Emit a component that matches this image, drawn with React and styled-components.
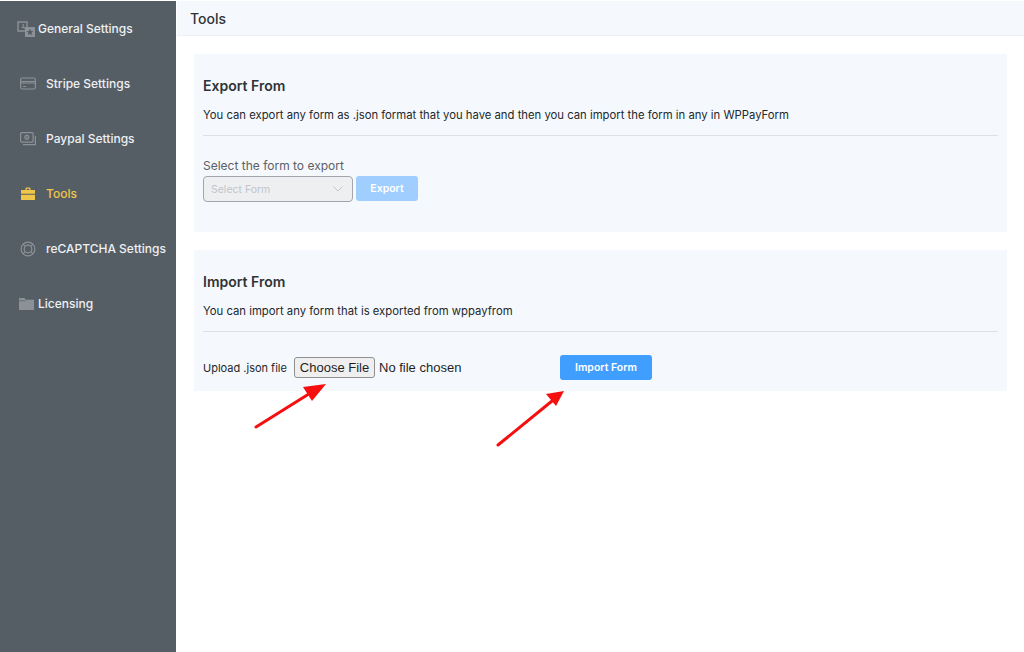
import React from 'react';
import styled, { createGlobalStyle } from 'styled-components';

const GlobalStyle = createGlobalStyle`
  html, body {
    margin: 0;
    padding: 0;
    background: #fff;
    font-family: Inter, "Liberation Sans", sans-serif;
  }
  * { box-sizing: border-box; }
`;

const Page = styled.div`
  position: relative;
  display: flex;
  width: 1024px;
  height: 652px;
  overflow: hidden;
  padding-top: 1px;
  background: #fff;
`;

const Sidebar = styled.nav`
  width: 176px;
  flex-shrink: 0;
  background: #565e65;
`;

const MenuItem = styled.a`
  display: flex;
  align-items: center;
  height: 55px;
  padding-left: ${(p) => (p.$flush ? '17px' : '20px')};
  gap: ${(p) => (p.$flush ? '2px' : '10px')};
  color: ${(p) => (p.$active ? '#f0c648' : '#eef0f2')};
  font-size: 12px;
  font-weight: 500;
`;

const IconSlot = styled.span`
  display: flex;
  width: ${(p) => (p.$flush ? '19px' : '16px')};
  height: 16px;
  align-items: center;
  justify-content: center;
  color: ${(p) => (p.$active ? '#f0c648' : '#8b9197')};
`;

const Main = styled.main`
  flex: 1;
  min-width: 0;
`;

const Header = styled.header`
  height: 35px;
  margin-left: 1px;
  padding-left: 13px;
  display: flex;
  align-items: center;
  background: #f5f9fd;
  border-bottom: 1px solid #eef0f6;
  color: #2f3338;
  font-size: 14px;
  font-weight: 500;
`;

const Content = styled.div`
  display: flex;
  flex-direction: column;
  gap: 18px;
  padding: 18px 17px 0 18px;
`;

const Card = styled.section`
  height: ${(p) => p.$height}px;
  padding: 0 9px;
  background: #f5f9fd;
`;

const CardTitle = styled.h2`
  margin: 0;
  padding-top: 23px;
  color: #2f3338;
  font-size: 14px;
  line-height: 17px;
  font-weight: 600;
`;

const CardText = styled.p`
  margin: 14px 0 0;
  color: #23272b;
  font-size: 11.3px;
  line-height: 14px;
`;

const Divider = styled.hr`
  margin: 13px 0 0;
  border: 0;
  border-top: 1px solid #dcdfe4;
`;

const FieldLabel = styled.label`
  display: block;
  margin-top: 22px;
  color: #5c6066;
  font-size: 12px;
  line-height: 15px;
`;

const ExportRow = styled.div`
  display: flex;
  gap: 3px;
  margin-top: 3px;
`;

const SelectBox = styled.div`
  display: flex;
  align-items: center;
  justify-content: space-between;
  width: 150px;
  height: 26px;
  padding: 0 9px 0 7px;
  border: 1px solid #a2a6ac;
  border-radius: 4px;
  background: #eeeff1;
  color: #c1c5ca;
  font-size: 10.5px;
`;

const PrimaryButton = styled.button`
  height: ${(p) => p.$height}px;
  width: ${(p) => p.$width}px;
  padding: 0;
  border: 0;
  border-radius: 3px;
  background: ${(p) => (p.disabled ? '#a0cfff' : '#409eff')};
  color: #fff;
  font-family: inherit;
  font-size: 10.5px;
  font-weight: 600;
`;

const UploadRow = styled.div`
  display: flex;
  align-items: center;
  margin-top: 23px;
`;

const UploadLabel = styled.label`
  width: 91px;
  flex-shrink: 0;
  color: #23272b;
  font-size: 11px;
`;

const FileInput = styled.input`
  width: 266px;
  color: #1f1f1f;
  font-family: "Liberation Sans", Arial, sans-serif;
  font-size: 13px;

  &::file-selector-button {
    width: 81px;
    height: 21px;
    margin-right: 4px;
    padding: 0;
    border: 1px solid #8f8f8f;
    border-radius: 3px;
    background: #efefef;
    color: #1f1f1f;
    font: inherit;
  }
`;

// the red arrows drawn on top of the screenshot
const Arrows = styled.svg`
  position: absolute;
  left: 0;
  top: 0;
  pointer-events: none;
`;

const GeneralIcon = () => (
  <svg width="19" height="16" viewBox="0 0 19 16" fill="currentColor">
    <path d="M1 1h9v9H1z" fill="none" stroke="currentColor" strokeWidth="1.4" />
    <path d="M4 8l1.5-5h1L8 8H7l-.3-1H4.3L4 8zm.6-2h1.8L5.500 3.500z" />
    <path d="M8 6h10v10H8z" />
    <path d="M13 7.800l1 2.200 2.300.2-1.700 1.600.5 2.300-2.100-1.200-2.100 1.200.5-2.300-1.700-1.600 2.300-.2z" fill="#565e65" />
  </svg>
);

const CardIcon = () => (
  <svg width="16" height="13" viewBox="0 0 16 13" fill="none" stroke="currentColor" strokeWidth="1.2">
    <rect x="0.600" y="1" width="14.800" height="11" rx="1.500" />
    <path d="M1 4.500h14M1 6h14M3 9.500h3" />
  </svg>
);

const MoneyIcon = () => (
  <svg width="16" height="14" viewBox="0 0 16 14" fill="none" stroke="currentColor" strokeWidth="1.200">
    <rect x="0.600" y="0.600" width="12.500" height="9.500" rx="1" />
    <circle cx="6.800" cy="5.300" r="2" />
    <path d="M6.800 4.400v1.800" />
    <path d="M3 12.700h12.400V4" />
  </svg>
);

const ToolboxIcon = () => (
  <svg width="14" height="13" viewBox="0 0 14 13" fill="currentColor">
    <path d="M4.500 3V1.600C4.500 1 5 .5 5.600 .5h2.800c.6 0 1.100.5 1.100 1.100V3H8.300V1.700H5.700V3z" />
    <path d="M0 3h14v3.800H0zM0 7.800h14V13H0z" />
  </svg>
);

const LifeRingIcon = () => (
  <svg width="16" height="16" viewBox="0 0 16 16" fill="none" stroke="currentColor" strokeWidth="1.200">
    <circle cx="8" cy="8" r="6.900" />
    <circle cx="8" cy="8" r="3.800" />
    <path d="M3.100 3.100l2.200 2.200M12.900 3.100l-2.200 2.200M3.100 12.900l2.200-2.200M12.900 12.900l-2.200-2.200" />
  </svg>
);

const FolderIcon = () => (
  <svg width="15" height="12" viewBox="0 0 15 12" fill="currentColor">
    <path d="M0 0h5.500l1.200 1.800H15V12H0z" />
    <path d="M0 2.800h6.500" stroke="#565e65" strokeWidth=".6" />
  </svg>
);

const Chevron = () => (
  <svg width="10" height="6" viewBox="0 0 10 6" fill="none" stroke="#c4c8cd" strokeWidth="1">
    <path d="M.5 .5L5 5l4.500-4.500" />
  </svg>
);

const menu = [
  { label: 'General Settings', icon: GeneralIcon, flush: true },
  { label: 'Stripe Settings', icon: CardIcon },
  { label: 'Paypal Settings', icon: MoneyIcon },
  { label: 'Tools', icon: ToolboxIcon, active: true },
  { label: 'reCAPTCHA Settings', icon: LifeRingIcon },
  { label: 'Licensing', icon: FolderIcon, flush: true },
];

export default function App() {
  return (
    <Page>
      <GlobalStyle />
      <Sidebar>
        {menu.map((item) => (
          <MenuItem key={item.label} $active={item.active} $flush={item.flush}>
            <IconSlot $active={item.active} $flush={item.flush}>
              <item.icon />
            </IconSlot>
            {item.label}
          </MenuItem>
        ))}
      </Sidebar>
      <Main>
        <Header>Tools</Header>
        <Content>
          <Card $height={178}>
            <CardTitle>Export From</CardTitle>
            <CardText>
              You can export any form as .json format that you have and then you can import the form in any in WPPayForm
            </CardText>
            <Divider />
            <FieldLabel>Select the form to export</FieldLabel>
            <ExportRow>
              <SelectBox>
                Select Form
                <Chevron />
              </SelectBox>
              <PrimaryButton disabled $width={62} $height={25}>Export</PrimaryButton>
            </ExportRow>
          </Card>
          <Card $height={141}>
            <CardTitle>Import From</CardTitle>
            <CardText>You can import any form that is exported from wppayfrom</CardText>
            <Divider />
            <UploadRow>
              <UploadLabel>Upload .json file</UploadLabel>
              <FileInput type="file" />
              <PrimaryButton $width={92} $height={25}>Import Form</PrimaryButton>
            </UploadRow>
          </Card>
        </Content>
      </Main>
      <Arrows width="1024" height="652" viewBox="0 0 1024 652">
        <path d="M256 427L312 392" stroke="#f50f0f" strokeWidth="3" strokeLinecap="round" />
        <path d="M326 384L303 387L312 401z" fill="#f50f0f" />
        <path d="M498 445L552 401" stroke="#f50f0f" strokeWidth="3" strokeLinecap="round" />
        <path d="M564 391L546 394L556 406z" fill="#f50f0f" />
      </Arrows>
    </Page>
  );
}
